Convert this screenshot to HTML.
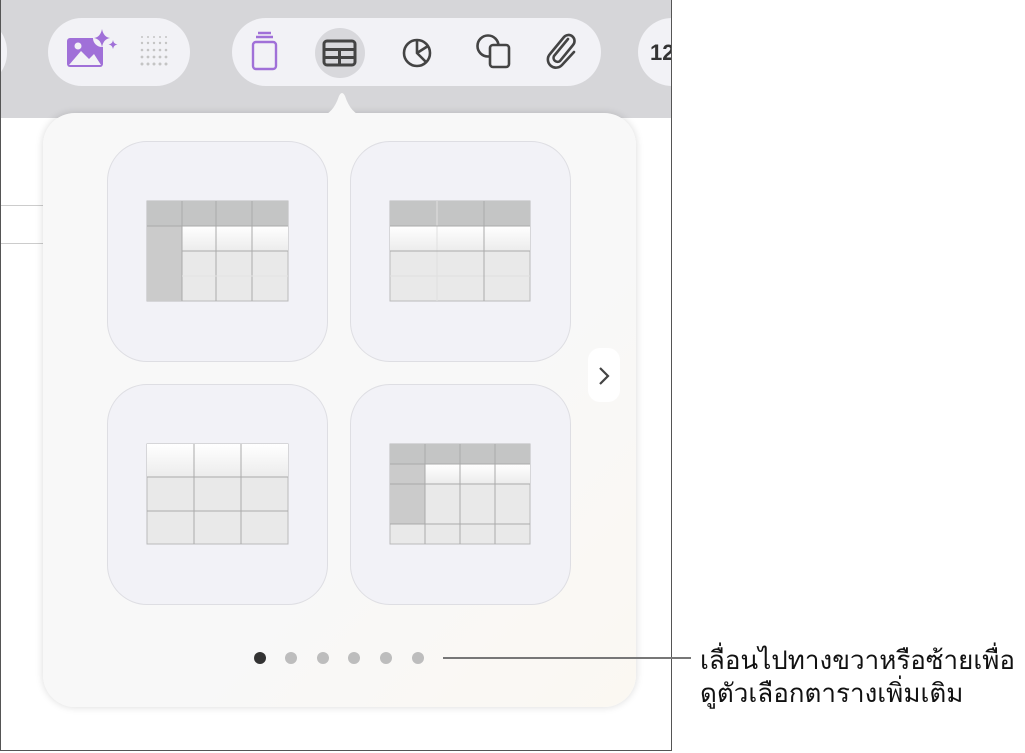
<!DOCTYPE html><html><head><meta charset="utf-8"><style>
body{margin:0;width:1025px;height:753px;background:#fff;position:relative;overflow:hidden;font-family:"Liberation Sans",sans-serif}
.scr{position:absolute;left:0;top:0;width:670px;height:750px;border-left:1.5px solid #555;border-right:1.5px solid #555;border-bottom:1.5px solid #555;background:#fff;overflow:hidden}
.top{position:absolute;left:0;top:0;width:670px;height:118px;background:#d6d6d9}
.pill{position:absolute;background:#f2f2f6;border-radius:34px;top:18px;height:68px}
.pop{position:absolute;left:42px;top:113px;width:593px;height:594px;background:linear-gradient(135deg,#f8f8f8 60%,#fbf8f2);border-radius:32px;box-shadow:0 0 8px rgba(0,0,0,.15)}
.card{position:absolute;width:221px;height:221px;background:#f2f2f7;border:1px solid #dedee3;border-radius:40px;box-sizing:border-box}
.dot{position:absolute;top:652px;width:12px;height:12px;border-radius:50%;background:#bdbdbd}
.t{position:absolute;left:700px;font-size:26px;color:#111;font-family:"Liberation Sans","Noto Sans CJK SC",sans-serif;white-space:nowrap}
</style></head><body>
<div class="scr">
<div class="top"></div>
<div style="position:absolute;left:0;top:205px;width:42px;height:1px;background:#ccc"></div>
<div style="position:absolute;left:0;top:243px;width:42px;height:1px;background:#ccc"></div>
<div class="pill" style="left:-60px;width:66px"></div>
<div class="pill" style="left:47px;width:142px"></div>
<div class="pill" style="left:231px;width:369px"></div>
<div class="pill" style="left:637px;width:80px"><span style="position:absolute;left:12px;top:22px;font-size:22px;font-weight:bold;color:#333">12</span></div>
<svg style="position:absolute;left:0;top:0" width="670" height="118">
<rect x="66" y="38" width="36" height="29" rx="3" fill="#a070d8"/>
<path d="M68 65 L80 51 L88 59 L93 54 L100 65Z" fill="#f2f2f6"/><circle cx="77" cy="46" r="3.5" fill="#f2f2f6"/>
<circle cx="101" cy="38" r="9" fill="#f2f2f6"/>
<path d="M101 29 q1.5 8 8 9 q-6.5 1 -8 9 q-1.5 -8 -8 -9 q6.5 -1 8 -9z M112 40 q.6 4 4.5 4.5 q-3.9 .5 -4.5 4.5 q-.6 -4 -4.5 -4.5 q3.9 -.5 4.5 -4.5z" fill="#a070d8"/>
<g fill="#c4c4c4">
<circle cx="141" cy="37" r="1"/><circle cx="147" cy="37" r="1"/><circle cx="153" cy="37" r="1"/><circle cx="159" cy="37" r="1"/><circle cx="165" cy="37" r="1"/>
<circle cx="141" cy="43" r="1.2"/><circle cx="147" cy="43" r="1.2"/><circle cx="153" cy="43" r="1.2"/><circle cx="159" cy="43" r="1.2"/><circle cx="165" cy="43" r="1.2"/>
<circle cx="141" cy="50" r="1.3"/><circle cx="147" cy="50" r="1.3"/><circle cx="153" cy="50" r="1.3"/><circle cx="159" cy="50" r="1.3"/><circle cx="165" cy="50" r="1.3"/>
<circle cx="141" cy="57" r="1.4"/><circle cx="147" cy="57" r="1.4"/><circle cx="153" cy="57" r="1.4"/><circle cx="159" cy="57" r="1.4"/><circle cx="165" cy="57" r="1.4"/>
<circle cx="141" cy="64" r="1.5"/><circle cx="147" cy="64" r="1.5"/><circle cx="153" cy="64" r="1.5"/><circle cx="159" cy="64" r="1.5"/><circle cx="165" cy="64" r="1.5"/></g>
<g stroke="#a070d8" stroke-width="2.4" fill="none"><rect x="252" y="42" width="23" height="27" rx="3"/><path d="M255 37h17M257 33h13"/></g>
<circle cx="339" cy="53" r="25" fill="#d8d8dc"/>
<g stroke="#444" stroke-width="3" fill="none"><rect x="323" y="41" width="31" height="24" rx="3"/><path d="M323 49.5h31M323 57.5h31M338.5 49.5v15"/></g>
<g stroke="#444" stroke-width="2.6" fill="none"><circle cx="416" cy="53" r="13"/><path d="M416 40v13l9 9M416 53l11-7"/></g>
<g stroke="#444" stroke-width="2.6" fill="none"><circle cx="487" cy="46" r="10.5"/><rect x="489" y="45" width="19" height="22" rx="3" fill="#f2f2f6"/></g>
<path d="M567 39 L553 56 a4 4 0 0 0 6 5 L572 45 a6 6 0 0 0 -9 -8 L549 54 a8 8 0 0 0 12 11 L573 52" stroke="#444" stroke-width="2.6" fill="none" stroke-linecap="round"/>
</svg>
<div class="pop"></div>
<svg style="position:absolute;left:320px;top:90px" width="42" height="26"><path d="M0 26 Q12 24 18 6 Q21 0 24 6 Q30 24 42 26Z" fill="#f8f8f8"/></svg>
<div class="card" style="left:106px;top:141px"></div>
<div class="card" style="left:349px;top:141px"></div>
<div class="card" style="left:106px;top:384px"></div>
<div class="card" style="left:349px;top:384px"></div>
<svg style="position:absolute;left:0;top:0" width="670" height="750">
<defs><linearGradient id="w" x1="0" y1="0" x2="0" y2="1"><stop offset="0" stop-color="#fff"/><stop offset="1" stop-color="#ececec"/></linearGradient></defs>
<rect x="146" y="201" width="141" height="100" fill="#e9e9e9" stroke="#bbb"/>
<rect x="146" y="201" width="141" height="25" fill="#c4c5c5"/>
<rect x="146" y="226" width="35" height="75" fill="#cbcbcb"/>
<rect x="181" y="226" width="106" height="25" fill="url(#w)"/>
<g stroke="#aaa"><path d="M146 226h141M181 251h106M181 201v100M215 201v100M251 201v100"/></g>
<path d="M181 276h106" stroke="#e2e2e2"/>
<rect x="389" y="201" width="140" height="100" fill="#e9e9e9" stroke="#bbb"/>
<rect x="389" y="201" width="140" height="25" fill="#c4c5c5"/>
<rect x="389" y="226" width="140" height="25" fill="url(#w)"/>
<path d="M389 276h140M436 201v100" stroke="#e0e0e0"/>
<g stroke="#aaa"><path d="M389 226h140M389 251h140M483 201v100"/></g>
<rect x="146" y="444" width="141" height="100" fill="#e9e9e9" stroke="#bbb"/>
<rect x="146" y="444" width="141" height="33" fill="url(#w)"/>
<g stroke="#aaa"><path d="M146 477h141M146 511h141M193 444v100M240 444v100"/></g>
<rect x="389" y="444" width="140" height="100" fill="#e9e9e9" stroke="#bbb"/>
<rect x="389" y="444" width="140" height="20" fill="#c4c5c5"/>
<rect x="389" y="464" width="35" height="60" fill="#cbcbcb"/>
<rect x="424" y="464" width="105" height="20" fill="url(#w)"/>
<g stroke="#aaa"><path d="M389 464h140M389 484h140M389 524h140M424 444v100M459 444v100M494 444v100"/></g>
</svg>
<div style="position:absolute;left:587px;top:348px;width:32px;height:54px;background:#fff;border-radius:12px"></div>
<svg style="position:absolute;left:595px;top:365px" width="16" height="22"><path d="M4 3l8 8-8 8" stroke="#444" stroke-width="2.2" fill="none"/></svg>
<div class="dot" style="left:253px;background:#333"></div>
<div class="dot" style="left:284px"></div><div class="dot" style="left:316px"></div><div class="dot" style="left:347px"></div><div class="dot" style="left:379px"></div><div class="dot" style="left:411px"></div>
</div>
<div style="position:absolute;left:443px;top:657px;width:248px;height:2px;background:#777"></div>
<div class="t" style="top:640px">เลื่อนไปทางขวาหรือซ้ายเพื่อ</div>
<div class="t" style="top:673px">ดูตัวเลือกตารางเพิ่มเติม</div>
</body></html>
